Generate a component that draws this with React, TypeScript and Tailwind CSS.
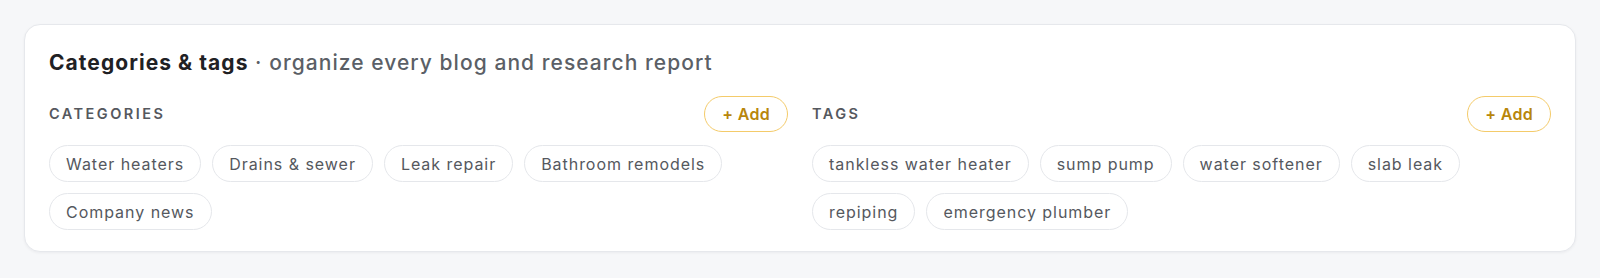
import React from "react";

const categories = ["Water heaters", "Drains & sewer", "Leak repair", "Bathroom remodels", "Company news"];
const tags = ["tankless water heater", "sump pump", "water softener", "slab leak", "repiping", "emergency plumber"];

function Group({ label, items }: { label: string; items: string[] }) {
  return (
    <div className="flex flex-col">
      <div className="flex items-center justify-between h-9">
        <span className="text-[14.5px] font-semibold uppercase tracking-[0.17em] text-[#55585e]">{label}</span>
        <button className="h-9 px-[17px] rounded-full border border-[#f4cb6a] bg-white text-[16px] font-semibold tracking-[0.02em] text-[#b8860b]">
          + Add
        </button>
      </div>
      <div className="mt-[13px] flex flex-wrap gap-x-[11px] gap-y-[11px]">
        {items.map((t) => (
          <span
            key={t}
            className="h-[37px] px-[16px] flex items-center rounded-full border border-[#e5e7eb] bg-white text-[16px] tracking-[0.06em] text-[#55585e]"
          >
            {t}
          </span>
        ))}
      </div>
    </div>
  );
}

export default function App() {
  return (
    <div className="min-h-[278px] bg-[#f6f7f9] p-6 font-['Inter',sans-serif]">
      <div className="h-[228px] rounded-2xl border border-[#e6e8ec] bg-white px-6 pt-[24px] shadow-[0_1px_3px_rgba(16,24,40,0.05)]">
        <h2 className="text-[21px] leading-[28px] tracking-[0.05em] text-[#1f2124]">
          <span className="font-bold">Categories &amp; tags</span>
          <span className="font-medium text-[#5b5f66]"> · organize every blog and research report</span>
        </h2>
        <div className="mt-[19px] grid grid-cols-2 gap-6">
          <Group label="Categories" items={categories} />
          <Group label="Tags" items={tags} />
        </div>
      </div>
    </div>
  );
}
